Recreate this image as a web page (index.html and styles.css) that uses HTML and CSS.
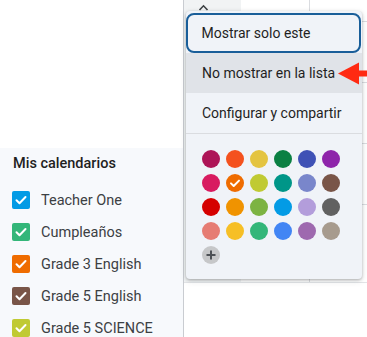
FILE: index.html
```html
<!DOCTYPE html>
<html lang="es">
<head>
<meta charset="utf-8">
<link rel="stylesheet" href="styles.css">
</head>
<body>
<div class="app">
  <div class="left">
    <div class="left-top"></div>
    <div class="sidebar">
      <div class="sidebar-title">Mis calendarios</div>
      <ul class="cal-list">
        <li class="cal"><span class="box c-peacock"><svg viewBox="0 0 18 18"><path d="M4.5 9.2l3 3 6-6.2"/></svg></span>Teacher One</li>
        <li class="cal"><span class="box c-sage"><svg viewBox="0 0 18 18"><path d="M4.5 9.2l3 3 6-6.2"/></svg></span>Cumpleaños</li>
        <li class="cal"><span class="box c-pumpkin"><svg viewBox="0 0 18 18"><path d="M4.5 9.2l3 3 6-6.2"/></svg></span>Grade 3 English</li>
        <li class="cal"><span class="box c-cocoa"><svg viewBox="0 0 18 18"><path d="M4.5 9.2l3 3 6-6.2"/></svg></span>Grade 5 English</li>
        <li class="cal"><span class="box c-avocado"><svg viewBox="0 0 18 18"><path d="M4.5 9.2l3 3 6-6.2"/></svg></span>Grade 5 SCIENCE</li>
      </ul>
    </div>
  </div>
  <div class="main">
    <div class="grid">
      <div class="col col-hl">
        <svg class="chev" viewBox="0 0 10 7"><path d="M1 6l4-4.2L9 6"/></svg>
      </div>
      <div class="col col-a">
        <div class="hour h1"></div><div class="hour"></div><div class="hour"></div><div class="hour"></div>
      </div>
      <div class="col col-b">
        <div class="hour h1"></div><div class="hour"></div><div class="hour"></div><div class="hour"></div>
      </div>
    </div>
  </div>
</div>

<div class="menu">
  <div class="item item-focus">Mostrar solo este</div>
  <div class="item item-hover">No mostrar en la lista</div>
  <div class="item">Configurar y compartir</div>
  <div class="divider"></div>
  <div class="swatches">
    <span class="sw c-radicchio"></span>
    <span class="sw c-tangerine"></span>
    <span class="sw c-citron"></span>
    <span class="sw c-basil"></span>
    <span class="sw c-blueberry"></span>
    <span class="sw c-grape"></span>
    <span class="sw c-cherry"></span>
    <span class="sw c-pumpkin"><svg viewBox="0 0 18 18"><path d="M5 9.4l2.7 2.6 5.3-5.4"/></svg></span>
    <span class="sw c-avocado"></span>
    <span class="sw c-eucalyptus"></span>
    <span class="sw c-lavender"></span>
    <span class="sw c-cocoa"></span>
    <span class="sw c-tomato"></span>
    <span class="sw c-mango"></span>
    <span class="sw c-pistachio"></span>
    <span class="sw c-peacock"></span>
    <span class="sw c-wisteria"></span>
    <span class="sw c-graphite"></span>
    <span class="sw c-flamingo"></span>
    <span class="sw c-banana"></span>
    <span class="sw c-sage"></span>
    <span class="sw c-cobalt"></span>
    <span class="sw c-amethyst"></span>
    <span class="sw c-birch"></span>
    <span class="sw sw-add"><svg viewBox="0 0 18 18"><path d="M9 4.5v9M4.5 9h9"/></svg></span>
  </div>
</div>

<svg class="arrow" viewBox="0 0 31 25"><polygon points="2,12.5 23,1.5 23,23.5"/><rect x="21" y="9.5" width="10" height="6"/></svg>
</body>
</html>
```

FILE: styles.css
```css
* { box-sizing: border-box; }
html, body {
  margin: 0;
  padding: 0;
  width: 367px;
  height: 337px;
  overflow: hidden;
  background: #ffffff;
  font-family: Roboto, "Liberation Sans", Arial, sans-serif;
  color: #202124;
}
.app {
  display: flex;
  width: 367px;
  height: 337px;
}
.left {
  width: 183px;
  flex-shrink: 0;
  display: flex;
  flex-direction: column;
  overflow: hidden;
}
.left-top {
  height: 148px;
  flex-shrink: 0;
  background: #ffffff;
}
.sidebar {
  flex: 1 0 auto;
  background: #f7f9fc;
  padding: 7px 0 0 0;
}
.sidebar-title {
  padding-left: 13px;
  font-size: 14.5px;
  line-height: 18px;
  font-weight: 500;
  color: #1f1f1f;
}
.cal-list {
  list-style: none;
  margin: 11px 0 0 0;
  padding: 0;
}
.cal {
  height: 32px;
  display: flex;
  align-items: center;
  padding-left: 12px;
  font-size: 14.5px;
  color: #3c4043;
}
.box {
  width: 18px;
  height: 18px;
  border-radius: 2px;
  margin-right: 11px;
  display: flex;
}
.box svg, .sw svg {
  width: 18px;
  height: 18px;
  fill: none;
  stroke: #ffffff;
  stroke-width: 2;
  stroke-linecap: round;
  stroke-linejoin: round;
}
.main {
  flex: 1;
  border-left: 1px solid #c9ccd1;
}
.grid {
  display: flex;
  height: 283px;
  border-bottom: 1px solid #e3e5e8;
}
.col { height: 100%; }
.col-hl {
  width: 57px;
  background: #f1f3f4;
  position: relative;
}
.chev {
  position: absolute;
  left: 14px;
  top: 4px;
  width: 11px;
  height: 7px;
  fill: none;
  stroke: #3c4043;
  stroke-width: 1.6;
}
.col-a {
  width: 69px;
  border-right: 1px solid #dadce0;
}
.col-b { flex: 1; }
.hour {
  height: 61px;
  border-bottom: 1px solid #dadce0;
}
.hour.h1 { height: 22px; }

.menu {
  position: absolute;
  left: 186px;
  top: 11px;
  width: 176px;
  height: 268px;
  background: #f0f3f8;
  border-radius: 4px;
  box-shadow: 0 1px 3px rgba(60, 64, 67, 0.35), 0 2px 6px rgba(60, 64, 67, 0.15);
  padding-top: 2px;
}
.item {
  height: 40px;
  display: flex;
  align-items: center;
  padding-left: 16px;
  font-size: 14px;
  color: #1f1f1f;
}
.item-focus {
  border: 2.5px solid #195e99;
  border-radius: 8px;
  padding-left: 13.5px;
  margin-right: 1px;
}
.item-hover {
  background: #e0e3e8;
}
.divider {
  height: 1px;
  background: #dadce0;
}
.swatches {
  display: grid;
  grid-template-columns: repeat(6, 18px);
  grid-auto-rows: 18px;
  gap: 6px;
  padding: 16px 0 0 16px;
}
.sw {
  width: 18px;
  height: 18px;
  border-radius: 50%;
  display: flex;
}
.sw-add {
  background: #c6c7c9;
}
.sw-add svg {
  stroke: #4d5156;
  stroke-width: 2;
  stroke-linecap: butt;
}

.c-radicchio { background: #ad1457; }
.c-tangerine { background: #f4511e; }
.c-citron { background: #e4c441; }
.c-basil { background: #0b8043; }
.c-blueberry { background: #3f51b5; }
.c-grape { background: #8e24aa; }
.c-cherry { background: #d81b60; }
.c-pumpkin { background: #ef6c00; }
.c-avocado { background: #c0ca33; }
.c-eucalyptus { background: #009688; }
.c-lavender { background: #7986cb; }
.c-cocoa { background: #795548; }
.c-tomato { background: #d50000; }
.c-mango { background: #f09300; }
.c-pistachio { background: #7cb342; }
.c-peacock { background: #039be5; }
.c-wisteria { background: #b39ddb; }
.c-graphite { background: #616161; }
.c-flamingo { background: #e67c73; }
.c-banana { background: #f6bf26; }
.c-sage { background: #33b679; }
.c-cobalt { background: #4285f4; }
.c-amethyst { background: #9e69af; }
.c-birch { background: #a79b8e; }

.arrow {
  position: absolute;
  left: 336px;
  top: 61px;
  width: 31px;
  height: 25px;
  fill: #ff2a12;
}
```
